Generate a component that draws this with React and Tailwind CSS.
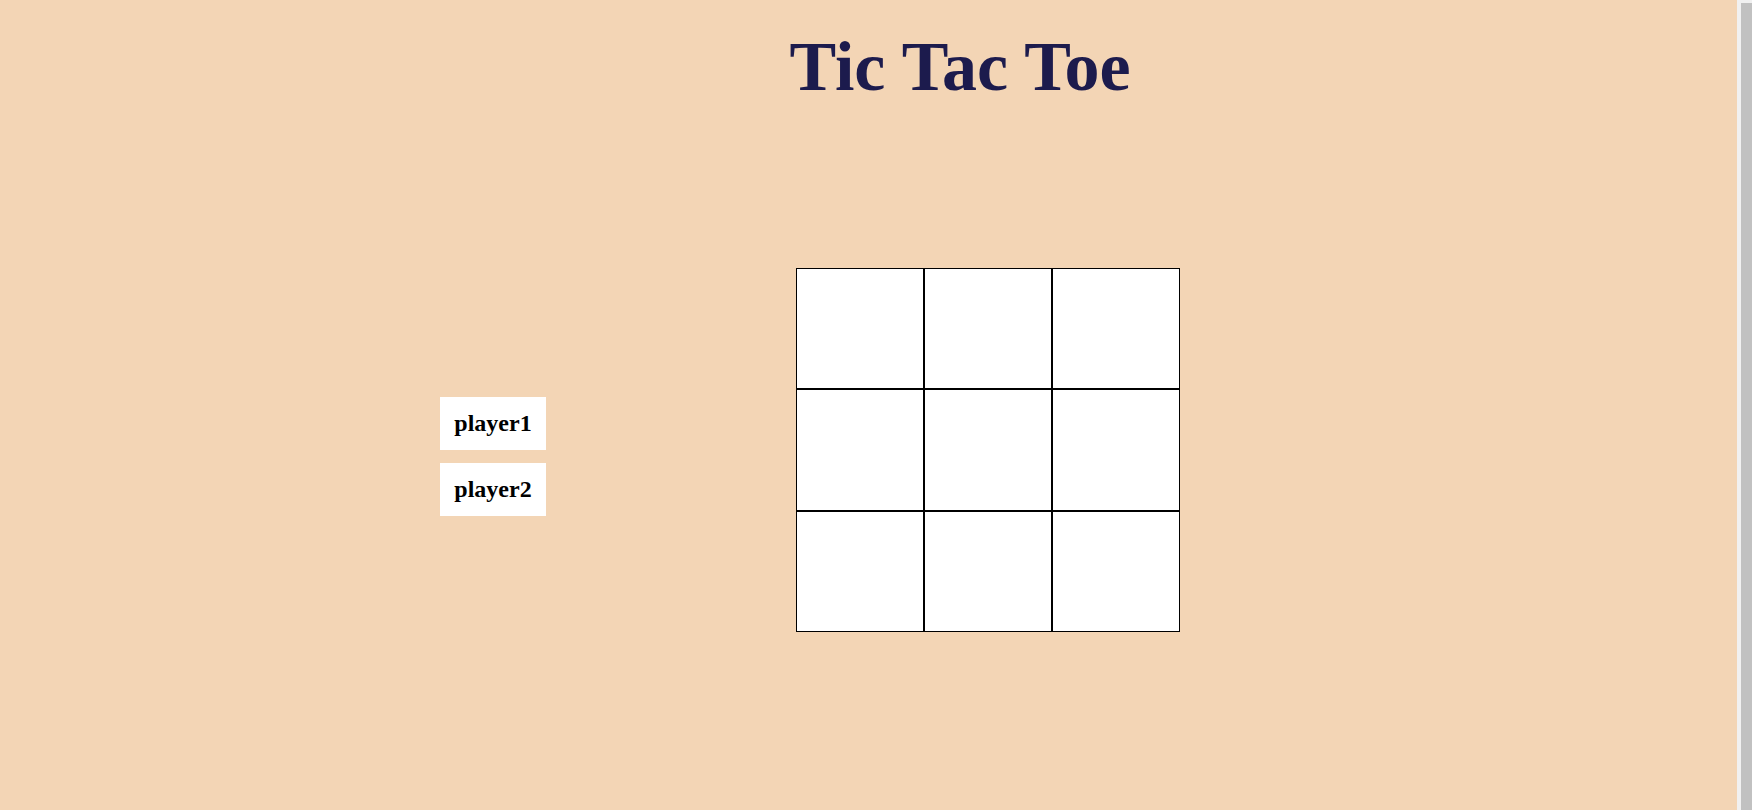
export default function App() {
  const cells = Array.from({ length: 9 });
  const rowH = ["h-[121px]", "h-[122px]", "h-[121px]"];

  return (
    <div className="flex h-[810px] overflow-hidden bg-[#f3d5b5] font-['Liberation_Serif',serif]">
      <div className="flex-1">
        {/* Title */}
        <div className="flex justify-center pl-[183px] pt-[27px]">
          <h1 className="text-[70px] font-bold leading-[1.15] text-[#1c1b4d]">Tic Tac Toe</h1>
        </div>

        {/* Players + board */}
        <div className="mt-[160px] flex items-start gap-[250px] pl-[440px]">
          <div className="mt-[129px] flex flex-col gap-[13px]">
            <div className="flex h-[53px] w-[106px] items-center justify-center bg-white text-[24px] font-bold text-black">
              player1
            </div>
            <div className="flex h-[53px] w-[106px] items-center justify-center bg-white text-[24px] font-bold text-black">
              player2
            </div>
          </div>

          <div className="grid w-[384px] grid-cols-3">
            {cells.map((_, i) => (
              <button
                key={i}
                className={`${rowH[Math.floor(i / 3)]} w-[128px] border border-black bg-white`}
              />
            ))}
          </div>
        </div>
      </div>

      {/* scrollbar */}
      <div className="flex w-[15px] bg-[#f1f1f1] pt-[3px] pl-[4px]">
        <div className="h-full w-full bg-[#c1c1c1]" />
      </div>
    </div>
  );
}
